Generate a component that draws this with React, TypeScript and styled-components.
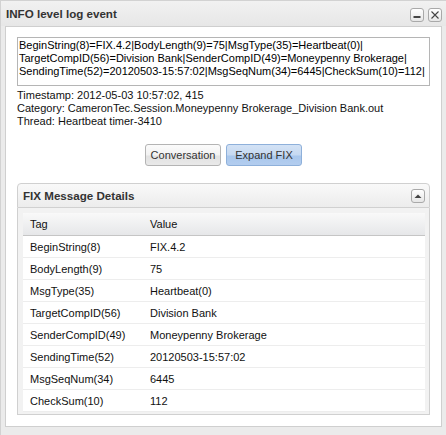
import React from "react";
import styled, { createGlobalStyle } from "styled-components";

const GlobalStyle = createGlobalStyle`
  html, body { margin: 0; padding: 0; background: #ffffff; }
  * { box-sizing: border-box; }
`;

const Window = styled.div`
  width: 446px;
  height: 435px;
  display: flex;
  flex-direction: column;
  background: #ebebeb;
  border-left: 1px solid #d2d2d2;
  border-top: 1px solid #d2d2d2;
  padding: 0 4px 8px 4px;
  font-family: "Liberation Sans", Arial, sans-serif;
  overflow: hidden;
`;

const TitleBar = styled.div`
  height: 25px;
  display: flex;
  align-items: center;
  padding-left: 4px;
  background: linear-gradient(#f1f1f1, #e7e7e7);
  margin: 0 -4px 0 -4px;
  padding-right: 4px;
`;

const Title = styled.div`
  flex: 1;
  font-size: 11.6px;
  font-weight: bold;
  color: #333;
  padding-left: 1px;
`;

const Tools = styled.div`
  display: flex;
  gap: 4px;
  margin-top: 2px;
`;

const ToolButton = styled.div`
  width: 14px;
  height: 14px;
  border: 1px solid #a9a9a9;
  border-radius: 3px;
  background: linear-gradient(#ffffff, #e6e6e6);
  display: flex;
  align-items: center;
  justify-content: center;
`;

const Body = styled.div`
  flex: 1;
  background: #ffffff;
  border: 1px solid #cfcfcf;
  display: flex;
  flex-direction: column;
`;

const MessageBox = styled.div`
  margin: 10px 11px 0 11px;
  height: 49px;
  border: 1px solid #b5b5b5;
  padding: 1px 1px;
  font-size: 11px;
  line-height: 13px;
  color: #000;
  overflow: hidden;
`;

const Line = styled.div`
  white-space: nowrap;
`;

const Info = styled.div`
  margin: 3px 11px 0 11px;
  font-size: 11px;
  line-height: 13px;
  color: #111;
`;

const ButtonRow = styled.div`
  display: flex;
  justify-content: center;
  gap: 5px;
  margin-top: 16px;
`;

const Button = styled.div<{ $pressed?: boolean }>`
  width: 76px;
  height: 22px;
  border-radius: 3px;
  border: 1px solid ${(p) => (p.$pressed ? "#8eb0da" : "#b4b4b4")};
  background: ${(p) =>
    p.$pressed
      ? "linear-gradient(#d3e2f5 0%, #c6d9f1 50%, #a9c7ec 55%, #b3cdef 100%)"
      : "linear-gradient(#fbfbfb 0%, #f2f2f2 50%, #e2e2e2 55%, #e9e9e9 100%)"};
  display: flex;
  align-items: center;
  justify-content: center;
  font-size: 11px;
  color: #333;
`;

const Panel = styled.div`
  margin: 17px 11px 0 11px;
  display: flex;
  flex-direction: column;
`;

const PanelHeader = styled.div`
  height: 25px;
  border: 1px solid #d0d0d0;
  border-radius: 4px 4px 0 0;
  background: linear-gradient(#f9f9f9, #ececec);
  display: flex;
  align-items: center;
  padding: 0 4px 0 5px;
`;

const PanelTitle = styled.div`
  flex: 1;
  font-size: 11.6px;
  font-weight: bold;
  color: #333;
`;

const PanelBody = styled.div`
  border: 1px solid #d0d0d0;
  border-top: none;
  background: #f2f2f2;
  padding: 5px 4px 2px 5px;
`;

const Grid = styled.div`
  background: #ffffff;
  font-size: 11px;
  color: #111;
`;

const GridRow = styled.div<{ $header?: boolean }>`
  display: grid;
  grid-template-columns: 120px 1fr;
  height: ${(p) => (p.$header ? "23px" : "22px")};
  border-bottom: 1px solid ${(p) => (p.$header ? "#c5c5c5" : "#ededed")};
  background: ${(p) => (p.$header ? "linear-gradient(#f9f9f9, #e6e7e9)" : "#ffffff")};
`;

const Cell = styled.div<{ $header?: boolean }>`
  display: flex;
  align-items: center;
  padding-left: 7px;
  white-space: nowrap;
  overflow: hidden;
  & + & {
    border-left: ${(p) => (p.$header ? "1px solid #d4d4d4" : "none")};
    padding-left: ${(p) => (p.$header ? "6px" : "7px")};
  }
`;

const rows: [string, string][] = [
  ["BeginString(8)", "FIX.4.2"],
  ["BodyLength(9)", "75"],
  ["MsgType(35)", "Heartbeat(0)"],
  ["TargetCompID(56)", "Division Bank"],
  ["SenderCompID(49)", "Moneypenny Brokerage"],
  ["SendingTime(52)", "20120503-15:57:02"],
  ["MsgSeqNum(34)", "6445"],
  ["CheckSum(10)", "112"],
];

export default function App() {
  return (
    <>
      <GlobalStyle />
      <Window>
        <TitleBar>
          <Title>INFO level log event</Title>
          <Tools>
            <ToolButton>
              <svg width="10" height="10" viewBox="0 0 10 10">
                <rect x="1.5" y="6" width="7" height="2" fill="#444" />
              </svg>
            </ToolButton>
            <ToolButton>
              <svg width="10" height="10" viewBox="0 0 10 10">
                <path d="M1.5 1.5 L8.5 8.5 M8.5 1.5 L1.5 8.5" stroke="#444" strokeWidth="1.1" />
              </svg>
            </ToolButton>
          </Tools>
        </TitleBar>
        <Body>
          <MessageBox>
            <Line>BeginString(8)=FIX.4.2|BodyLength(9)=75|MsgType(35)=Heartbeat(0)|</Line>
            <Line>TargetCompID(56)=Division Bank|SenderCompID(49)=Moneypenny Brokerage|</Line>
            <Line>SendingTime(52)=20120503-15:57:02|MsgSeqNum(34)=6445|CheckSum(10)=112|</Line>
          </MessageBox>
          <Info>
            <div>Timestamp: 2012-05-03 10:57:02, 415</div>
            <div>Category: CameronTec.Session.Moneypenny Brokerage_Division Bank.out</div>
            <div>Thread: Heartbeat timer-3410</div>
          </Info>
          <ButtonRow>
            <Button>Conversation</Button>
            <Button $pressed>Expand FIX</Button>
          </ButtonRow>
          <Panel>
            <PanelHeader>
              <PanelTitle>FIX Message Details</PanelTitle>
              <ToolButton>
                <svg width="10" height="10" viewBox="0 0 10 10">
                  <path d="M1.5 7 L5 3.5 L8.5 7 Z" fill="#444" />
                </svg>
              </ToolButton>
            </PanelHeader>
            <PanelBody>
              <Grid>
                <GridRow $header>
                  <Cell $header>Tag</Cell>
                  <Cell $header>Value</Cell>
                </GridRow>
                {rows.map(([tag, value]) => (
                  <GridRow key={tag}>
                    <Cell>{tag}</Cell>
                    <Cell>{value}</Cell>
                  </GridRow>
                ))}
              </Grid>
            </PanelBody>
          </Panel>
        </Body>
      </Window>
    </>
  );
}
